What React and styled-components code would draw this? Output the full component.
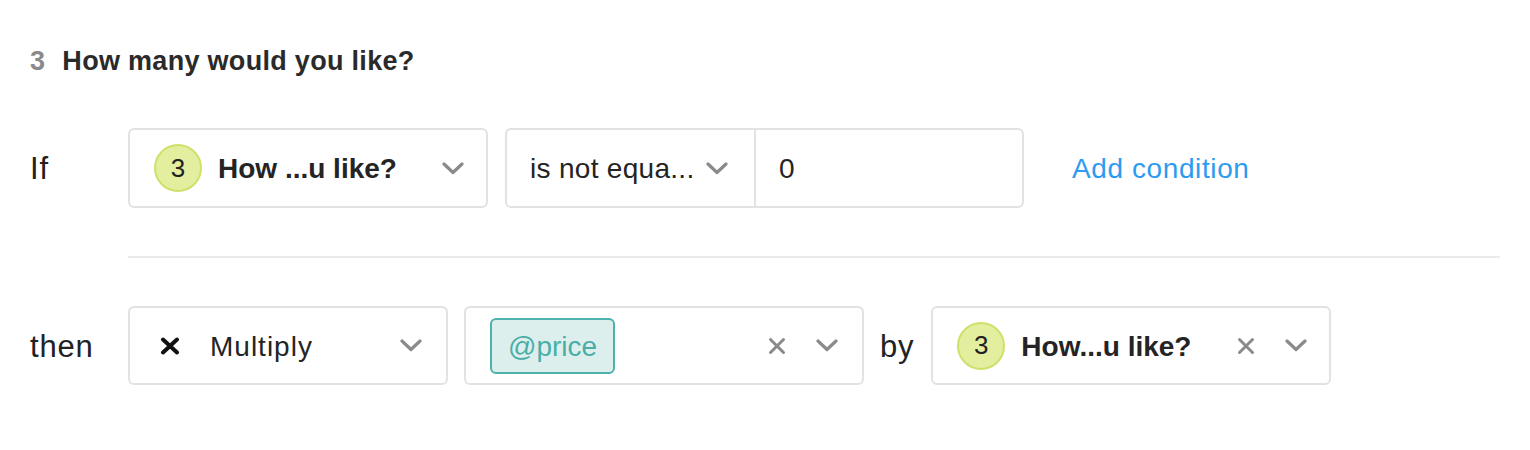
import React from "react";
import styled, { createGlobalStyle } from "styled-components";

const GlobalStyle = createGlobalStyle`
  body {
    margin: 0;
    background: #fff;
    font-family: "Liberation Sans", Arial, sans-serif;
    color: #232323;
  }
`;

const Wrap = styled.div`
  padding: 44px 30px 0 30px;
  width: 1530px;
  box-sizing: border-box;
`;

const Header = styled.div`
  display: flex;
  align-items: center;
  gap: 17px;
  font-size: 27px;
  font-weight: bold;
  letter-spacing: 0.3px;
  height: 34px;
`;

const Num = styled.span`
  color: #8a8a8a;
`;

const Title = styled.span`
  color: #2a2a2a;
`;

const Row = styled.div`
  display: flex;
  align-items: center;
  margin-top: ${(p) => p.$mt}px;
`;

const Label = styled.div`
  width: 98px;
  padding-top: 2px;
  font-size: 31px;
  letter-spacing: 0.8px;
  color: #222;
  flex-shrink: 0;
`;

const Box = styled.div`
  box-sizing: border-box;
  width: ${(p) => p.$w}px;
  height: ${(p) => p.$h || 80}px;
  border: 2px solid #e2e2e2;
  border-radius: 6px;
  display: flex;
  align-items: center;
  background: #fff;
  flex-shrink: 0;
`;

const Cell = styled.div`
  display: flex;
  align-items: center;
  height: 100%;
  padding: 0 ${(p) => p.$pr ?? 22}px 0 ${(p) => p.$pl ?? 22}px;
  box-sizing: border-box;
  width: ${(p) => (p.$w ? `${p.$w}px` : "auto")};
  flex: ${(p) => (p.$w ? "none" : 1)};
  border-right: ${(p) => (p.$split ? "2px solid #e2e2e2" : "none")};
`;

const Badge = styled.div`
  width: 44px;
  height: 44px;
  border-radius: 50%;
  background: #e3ee9f;
  border: 2px solid #cfe06b;
  display: flex;
  align-items: center;
  justify-content: center;
  font-size: 26px;
  color: #222;
  flex-shrink: 0;
`;

const Text = styled.span`
  padding-top: 2px;
  font-size: ${(p) => p.$size || 28}px;
  font-weight: ${(p) => (p.$bold ? "bold" : "normal")};
  letter-spacing: ${(p) => p.$ls || 0}px;
  color: #242424;
  margin-left: ${(p) => p.$ml || 0}px;
  white-space: nowrap;
`;

const Spacer = styled.div`
  flex: 1;
`;

const Link = styled.a`
  padding-top: 2px;
  font-size: 28px;
  letter-spacing: 0.6px;
  color: #2d9bf0;
  margin-left: 48px;
  text-decoration: none;
`;

const Divider = styled.div`
  margin: 48px 0 0 98px;
  height: 2px;
  background: #ebebeb;
`;

const Tag = styled.div`
  box-sizing: border-box;
  height: 56px;
  padding: 2px 16px 0;
  display: flex;
  align-items: center;
  background: #dcefed;
  border: 2px solid #4db2ab;
  border-radius: 6px;
  color: #4aaea7;
  font-size: 28px;
`;

const Gap = styled.div`
  width: ${(p) => p.$w}px;
  flex-shrink: 0;
`;

const By = styled.div`
  padding-top: 2px;
  font-size: 31px;
  letter-spacing: 0.8px;
  color: #222;
  margin: 0 17px 0 16px;
`;

const Chevron = () => (
  <svg width="22" height="13" viewBox="0 0 22 13">
    <polyline
      points="2,2 11,10.5 20,2"
      fill="none"
      stroke="#8a8a8a"
      strokeWidth="3.2"
      strokeLinecap="round"
      strokeLinejoin="round"
    />
  </svg>
);

const Clear = () => (
  <svg width="18" height="18" viewBox="0 0 18 18">
    <path
      d="M2.5 2.5 L15.5 15.5 M15.5 2.5 L2.5 15.5"
      stroke="#8a8a8a"
      strokeWidth="3"
      strokeLinecap="round"
    />
  </svg>
);

const Times = () => (
  <svg width="20" height="18" viewBox="0 0 20 18">
    <path
      d="M3 2.5 L17 15.5 M17 2.5 L3 15.5"
      stroke="#111"
      strokeWidth="4"
      strokeLinecap="round"
    />
  </svg>
);

export default function App() {
  return (
    <Wrap>
      <GlobalStyle />
      <Header>
        <Num>3</Num>
        <Title>How many would you like?</Title>
      </Header>

      <Row $mt={50}>
        <Label>If</Label>
        <Box $w={360}>
          <Cell $pl={24} $pr={22}>
            <Badge>3</Badge>
            <Text $bold $ml={16}>How ...u like?</Text>
            <Spacer />
            <Chevron />
          </Cell>
        </Box>
        <Gap $w={17} />
        <Box $w={519}>
          <Cell $w={249} $split $pl={23} $pr={26}>
            <Text $ls={0.3}>is not equa...</Text>
            <Spacer />
            <Chevron />
          </Cell>
          <Cell $pl={23}>
            <Text>0</Text>
          </Cell>
        </Box>
        <Link href="#">Add condition</Link>
      </Row>

      <Divider />

      <Row $mt={48}>
        <Label>then</Label>
        <Box $w={320} $h={79}>
          <Cell $pl={30} $pr={24}>
            <Times />
            <Text $ml={30} $ls={1}>Multiply</Text>
            <Spacer />
            <Chevron />
          </Cell>
        </Box>
        <Gap $w={16} />
        <Box $w={400} $h={79}>
          <Cell $pl={24} $pr={24}>
            <Tag>@price</Tag>
            <Spacer />
            <Clear />
            <Gap $w={30} />
            <Chevron />
          </Cell>
        </Box>
        <By>by</By>
        <Box $w={400} $h={79}>
          <Cell $pl={24} $pr={22}>
            <Badge>3</Badge>
            <Text $bold $ml={16}>How...u like?</Text>
            <Spacer />
            <Clear />
            <Gap $w={30} />
            <Chevron />
          </Cell>
        </Box>
      </Row>
    </Wrap>
  );
}
